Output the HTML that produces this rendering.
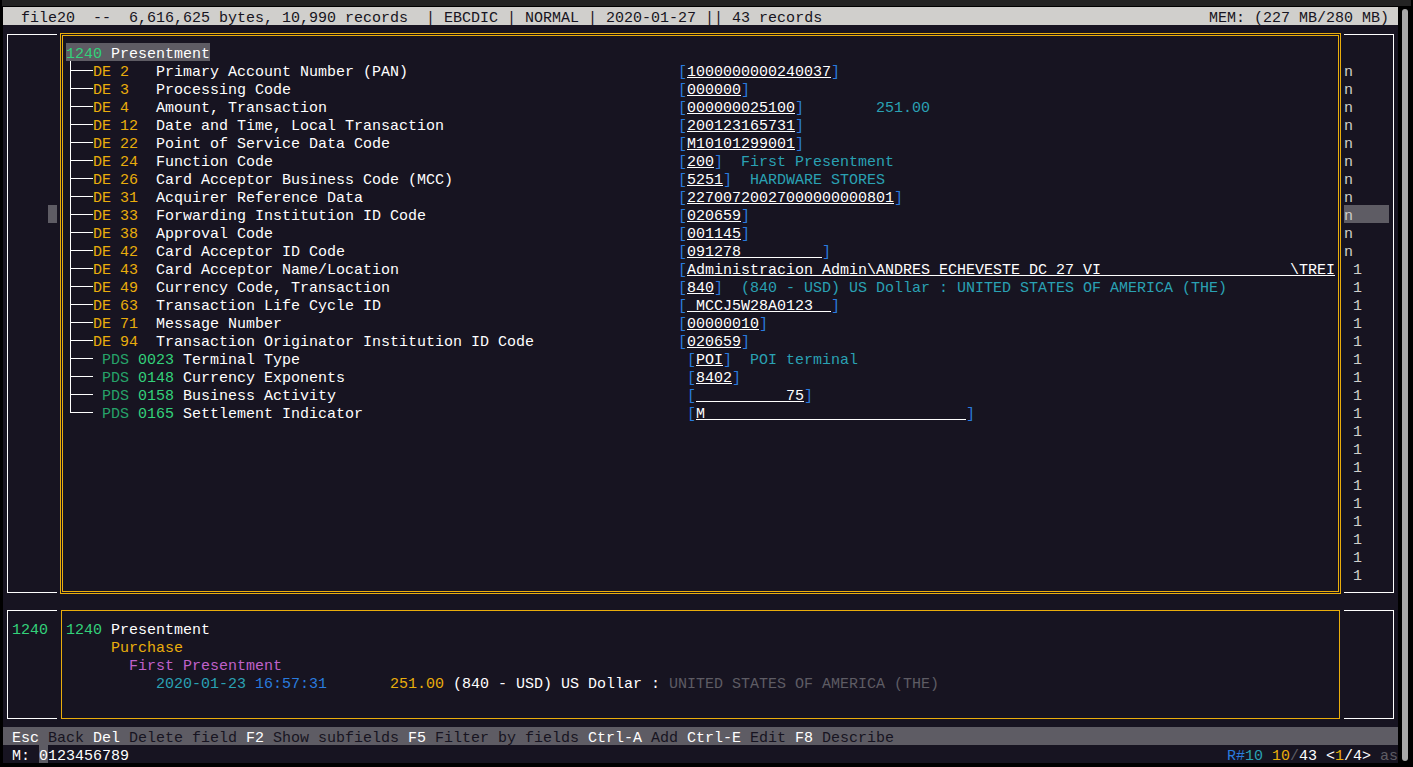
<!DOCTYPE html><html><head><meta charset="utf-8"><style>
html,body{margin:0;padding:0;background:#000;width:1413px;height:767px;overflow:hidden;position:relative}
#top{position:absolute;left:2px;top:0;width:1409px;height:6px;background:#232323}
#term{position:absolute;left:3px;top:7px;width:1395px;height:756px;background:#171421}
#sb{position:absolute;left:1402px;top:9px;width:6px;height:752px;background:#a8a8a8;border-radius:3px}
.r{position:absolute;height:1px}
.t{position:absolute;font-family:"Liberation Mono",monospace;font-size:15px;line-height:18px;height:18px;white-space:pre}
.u{text-decoration:underline;text-underline-offset:2px}
</style></head><body>
<div id="top"></div><div id="term"></div><div id="sb"></div>

<div class="r" style="left:3px;top:7px;width:1395px;height:18px;background:#d0cfcc"></div>
<div class="r" style="left:66px;top:43px;width:144px;height:18px;background:#5e5c64"></div>
<div class="r" style="left:70px;top:61px;width:1px;height:352px;background:#ffffff"></div>
<div class="r" style="left:70px;top:70px;width:23px;height:1px;background:#ffffff"></div>
<div class="r" style="left:70px;top:88px;width:23px;height:1px;background:#ffffff"></div>
<div class="r" style="left:70px;top:106px;width:23px;height:1px;background:#ffffff"></div>
<div class="r" style="left:70px;top:124px;width:23px;height:1px;background:#ffffff"></div>
<div class="r" style="left:70px;top:142px;width:23px;height:1px;background:#ffffff"></div>
<div class="r" style="left:70px;top:160px;width:23px;height:1px;background:#ffffff"></div>
<div class="r" style="left:70px;top:178px;width:23px;height:1px;background:#ffffff"></div>
<div class="r" style="left:70px;top:196px;width:23px;height:1px;background:#ffffff"></div>
<div class="r" style="left:70px;top:214px;width:23px;height:1px;background:#ffffff"></div>
<div class="r" style="left:70px;top:232px;width:23px;height:1px;background:#ffffff"></div>
<div class="r" style="left:70px;top:250px;width:23px;height:1px;background:#ffffff"></div>
<div class="r" style="left:70px;top:268px;width:23px;height:1px;background:#ffffff"></div>
<div class="r" style="left:70px;top:286px;width:23px;height:1px;background:#ffffff"></div>
<div class="r" style="left:70px;top:304px;width:23px;height:1px;background:#ffffff"></div>
<div class="r" style="left:70px;top:322px;width:23px;height:1px;background:#ffffff"></div>
<div class="r" style="left:70px;top:340px;width:23px;height:1px;background:#ffffff"></div>
<div class="r" style="left:70px;top:358px;width:23px;height:1px;background:#ffffff"></div>
<div class="r" style="left:70px;top:376px;width:23px;height:1px;background:#ffffff"></div>
<div class="r" style="left:70px;top:394px;width:23px;height:1px;background:#ffffff"></div>
<div class="r" style="left:70px;top:412px;width:23px;height:1px;background:#ffffff"></div>
<div class="r" style="left:1344px;top:205px;width:45px;height:18px;background:#5e5c64"></div>
<div class="r" style="left:48px;top:205px;width:9px;height:18px;background:#5e5c64"></div>
<div class="r" style="left:7px;top:34px;width:50px;height:1px;background:#ffffff"></div>
<div class="r" style="left:1344px;top:34px;width:50px;height:1px;background:#ffffff"></div>
<div class="r" style="left:7px;top:592px;width:50px;height:1px;background:#ffffff"></div>
<div class="r" style="left:1344px;top:592px;width:50px;height:1px;background:#ffffff"></div>
<div class="r" style="left:7px;top:34px;width:1px;height:559px;background:#ffffff"></div>
<div class="r" style="left:1393px;top:34px;width:1px;height:559px;background:#ffffff"></div>
<div class="r" style="left:7px;top:610px;width:50px;height:1px;background:#ffffff"></div>
<div class="r" style="left:1344px;top:610px;width:50px;height:1px;background:#ffffff"></div>
<div class="r" style="left:7px;top:718px;width:50px;height:1px;background:#ffffff"></div>
<div class="r" style="left:1344px;top:718px;width:50px;height:1px;background:#ffffff"></div>
<div class="r" style="left:7px;top:610px;width:1px;height:109px;background:#ffffff"></div>
<div class="r" style="left:1393px;top:610px;width:1px;height:109px;background:#ffffff"></div>
<div class="r" style="left:60px;top:33px;width:1281px;height:1px;background:#e9ad0c"></div>
<div class="r" style="left:60px;top:593px;width:1281px;height:1px;background:#e9ad0c"></div>
<div class="r" style="left:60px;top:33px;width:1px;height:561px;background:#e9ad0c"></div>
<div class="r" style="left:1340px;top:33px;width:1px;height:561px;background:#e9ad0c"></div>
<div class="r" style="left:62px;top:35px;width:1277px;height:1px;background:#e9ad0c"></div>
<div class="r" style="left:62px;top:591px;width:1277px;height:1px;background:#e9ad0c"></div>
<div class="r" style="left:62px;top:35px;width:1px;height:557px;background:#e9ad0c"></div>
<div class="r" style="left:1338px;top:35px;width:1px;height:557px;background:#e9ad0c"></div>
<div class="r" style="left:61px;top:610px;width:1279px;height:1px;background:#e9ad0c"></div>
<div class="r" style="left:61px;top:718px;width:1279px;height:1px;background:#e9ad0c"></div>
<div class="r" style="left:61px;top:610px;width:1px;height:109px;background:#e9ad0c"></div>
<div class="r" style="left:1339px;top:610px;width:1px;height:109px;background:#e9ad0c"></div>
<div class="r" style="left:3px;top:727px;width:1395px;height:18px;background:#5e5c64"></div>
<div class="r" style="left:39px;top:745px;width:9px;height:18px;background:#5e5c64"></div>
<div class="r" style="left:687px;top:77px;width:144px;height:1px;background:#ffffff"></div>
<div class="r" style="left:687px;top:95px;width:54px;height:1px;background:#ffffff"></div>
<div class="r" style="left:687px;top:113px;width:108px;height:1px;background:#ffffff"></div>
<div class="r" style="left:687px;top:131px;width:108px;height:1px;background:#ffffff"></div>
<div class="r" style="left:687px;top:149px;width:108px;height:1px;background:#ffffff"></div>
<div class="r" style="left:687px;top:167px;width:27px;height:1px;background:#ffffff"></div>
<div class="r" style="left:687px;top:185px;width:36px;height:1px;background:#ffffff"></div>
<div class="r" style="left:687px;top:203px;width:207px;height:1px;background:#ffffff"></div>
<div class="r" style="left:687px;top:221px;width:54px;height:1px;background:#ffffff"></div>
<div class="r" style="left:687px;top:239px;width:54px;height:1px;background:#ffffff"></div>
<div class="r" style="left:687px;top:257px;width:135px;height:1px;background:#ffffff"></div>
<div class="r" style="left:687px;top:275px;width:648px;height:1px;background:#ffffff"></div>
<div class="r" style="left:687px;top:293px;width:27px;height:1px;background:#ffffff"></div>
<div class="r" style="left:687px;top:311px;width:144px;height:1px;background:#ffffff"></div>
<div class="r" style="left:687px;top:329px;width:72px;height:1px;background:#ffffff"></div>
<div class="r" style="left:687px;top:347px;width:54px;height:1px;background:#ffffff"></div>
<div class="r" style="left:696px;top:365px;width:27px;height:1px;background:#ffffff"></div>
<div class="r" style="left:696px;top:383px;width:36px;height:1px;background:#ffffff"></div>
<div class="r" style="left:696px;top:401px;width:108px;height:1px;background:#ffffff"></div>
<div class="r" style="left:696px;top:419px;width:270px;height:1px;background:#ffffff"></div>
<div class="t" style="left:21px;top:10px;color:#171421">file20  --  6,616,625 bytes, 10,990 records  | EBCDIC | NORMAL | 2020-01-27 || 43 records</div>
<div class="t" style="left:1209px;top:10px;color:#171421">MEM: (227 MB/280 MB)</div>
<div class="t" style="left:66px;top:46px;color:#33d17a">1240</div>
<div class="t" style="left:111px;top:46px;color:#ffffff">Presentment</div>
<div class="t" style="left:93px;top:64px;color:#e9ad0c">DE</div>
<div class="t" style="left:120px;top:64px;color:#e9ad0c">2</div>
<div class="t" style="left:156px;top:64px;color:#ffffff">Primary Account Number (PAN)</div>
<div class="t" style="left:678px;top:64px;color:#2a7bde">[</div>
<div class="t" style="left:687px;top:64px;color:#ffffff">1000000000240037</div>
<div class="t" style="left:831px;top:64px;color:#2a7bde">]</div>
<div class="t" style="left:93px;top:82px;color:#e9ad0c">DE</div>
<div class="t" style="left:120px;top:82px;color:#e9ad0c">3</div>
<div class="t" style="left:156px;top:82px;color:#ffffff">Processing Code</div>
<div class="t" style="left:678px;top:82px;color:#2a7bde">[</div>
<div class="t" style="left:687px;top:82px;color:#ffffff">000000</div>
<div class="t" style="left:741px;top:82px;color:#2a7bde">]</div>
<div class="t" style="left:93px;top:100px;color:#e9ad0c">DE</div>
<div class="t" style="left:120px;top:100px;color:#e9ad0c">4</div>
<div class="t" style="left:156px;top:100px;color:#ffffff">Amount, Transaction</div>
<div class="t" style="left:678px;top:100px;color:#2a7bde">[</div>
<div class="t" style="left:687px;top:100px;color:#ffffff">000000025100</div>
<div class="t" style="left:795px;top:100px;color:#2a7bde">]</div>
<div class="t" style="left:876px;top:100px;color:#2aa1b3">251.00</div>
<div class="t" style="left:93px;top:118px;color:#e9ad0c">DE</div>
<div class="t" style="left:120px;top:118px;color:#e9ad0c">12</div>
<div class="t" style="left:156px;top:118px;color:#ffffff">Date and Time, Local Transaction</div>
<div class="t" style="left:678px;top:118px;color:#2a7bde">[</div>
<div class="t" style="left:687px;top:118px;color:#ffffff">200123165731</div>
<div class="t" style="left:795px;top:118px;color:#2a7bde">]</div>
<div class="t" style="left:93px;top:136px;color:#e9ad0c">DE</div>
<div class="t" style="left:120px;top:136px;color:#e9ad0c">22</div>
<div class="t" style="left:156px;top:136px;color:#ffffff">Point of Service Data Code</div>
<div class="t" style="left:678px;top:136px;color:#2a7bde">[</div>
<div class="t" style="left:687px;top:136px;color:#ffffff">M10101299001</div>
<div class="t" style="left:795px;top:136px;color:#2a7bde">]</div>
<div class="t" style="left:93px;top:154px;color:#e9ad0c">DE</div>
<div class="t" style="left:120px;top:154px;color:#e9ad0c">24</div>
<div class="t" style="left:156px;top:154px;color:#ffffff">Function Code</div>
<div class="t" style="left:678px;top:154px;color:#2a7bde">[</div>
<div class="t" style="left:687px;top:154px;color:#ffffff">200</div>
<div class="t" style="left:714px;top:154px;color:#2a7bde">]</div>
<div class="t" style="left:741px;top:154px;color:#2aa1b3">First Presentment</div>
<div class="t" style="left:93px;top:172px;color:#e9ad0c">DE</div>
<div class="t" style="left:120px;top:172px;color:#e9ad0c">26</div>
<div class="t" style="left:156px;top:172px;color:#ffffff">Card Acceptor Business Code (MCC)</div>
<div class="t" style="left:678px;top:172px;color:#2a7bde">[</div>
<div class="t" style="left:687px;top:172px;color:#ffffff">5251</div>
<div class="t" style="left:723px;top:172px;color:#2a7bde">]</div>
<div class="t" style="left:750px;top:172px;color:#2aa1b3">HARDWARE STORES</div>
<div class="t" style="left:93px;top:190px;color:#e9ad0c">DE</div>
<div class="t" style="left:120px;top:190px;color:#e9ad0c">31</div>
<div class="t" style="left:156px;top:190px;color:#ffffff">Acquirer Reference Data</div>
<div class="t" style="left:678px;top:190px;color:#2a7bde">[</div>
<div class="t" style="left:687px;top:190px;color:#ffffff">22700720027000000000801</div>
<div class="t" style="left:894px;top:190px;color:#2a7bde">]</div>
<div class="t" style="left:93px;top:208px;color:#e9ad0c">DE</div>
<div class="t" style="left:120px;top:208px;color:#e9ad0c">33</div>
<div class="t" style="left:156px;top:208px;color:#ffffff">Forwarding Institution ID Code</div>
<div class="t" style="left:678px;top:208px;color:#2a7bde">[</div>
<div class="t" style="left:687px;top:208px;color:#ffffff">020659</div>
<div class="t" style="left:741px;top:208px;color:#2a7bde">]</div>
<div class="t" style="left:93px;top:226px;color:#e9ad0c">DE</div>
<div class="t" style="left:120px;top:226px;color:#e9ad0c">38</div>
<div class="t" style="left:156px;top:226px;color:#ffffff">Approval Code</div>
<div class="t" style="left:678px;top:226px;color:#2a7bde">[</div>
<div class="t" style="left:687px;top:226px;color:#ffffff">001145</div>
<div class="t" style="left:741px;top:226px;color:#2a7bde">]</div>
<div class="t" style="left:93px;top:244px;color:#e9ad0c">DE</div>
<div class="t" style="left:120px;top:244px;color:#e9ad0c">42</div>
<div class="t" style="left:156px;top:244px;color:#ffffff">Card Acceptor ID Code</div>
<div class="t" style="left:678px;top:244px;color:#2a7bde">[</div>
<div class="t" style="left:687px;top:244px;color:#ffffff">091278         </div>
<div class="t" style="left:822px;top:244px;color:#2a7bde">]</div>
<div class="t" style="left:93px;top:262px;color:#e9ad0c">DE</div>
<div class="t" style="left:120px;top:262px;color:#e9ad0c">43</div>
<div class="t" style="left:156px;top:262px;color:#ffffff">Card Acceptor Name/Location</div>
<div class="t" style="left:678px;top:262px;color:#2a7bde">[</div>
<div class="t" style="left:687px;top:262px;color:#ffffff">Administracion Admin\ANDRES ECHEVESTE DC 27 VI                     \TREI</div>
<div class="t" style="left:93px;top:280px;color:#e9ad0c">DE</div>
<div class="t" style="left:120px;top:280px;color:#e9ad0c">49</div>
<div class="t" style="left:156px;top:280px;color:#ffffff">Currency Code, Transaction</div>
<div class="t" style="left:678px;top:280px;color:#2a7bde">[</div>
<div class="t" style="left:687px;top:280px;color:#ffffff">840</div>
<div class="t" style="left:714px;top:280px;color:#2a7bde">]</div>
<div class="t" style="left:741px;top:280px;color:#2aa1b3">(840 - USD) US Dollar : UNITED STATES OF AMERICA (THE)</div>
<div class="t" style="left:93px;top:298px;color:#e9ad0c">DE</div>
<div class="t" style="left:120px;top:298px;color:#e9ad0c">63</div>
<div class="t" style="left:156px;top:298px;color:#ffffff">Transaction Life Cycle ID</div>
<div class="t" style="left:678px;top:298px;color:#2a7bde">[</div>
<div class="t" style="left:687px;top:298px;color:#ffffff"> MCCJ5W28A0123  </div>
<div class="t" style="left:831px;top:298px;color:#2a7bde">]</div>
<div class="t" style="left:93px;top:316px;color:#e9ad0c">DE</div>
<div class="t" style="left:120px;top:316px;color:#e9ad0c">71</div>
<div class="t" style="left:156px;top:316px;color:#ffffff">Message Number</div>
<div class="t" style="left:678px;top:316px;color:#2a7bde">[</div>
<div class="t" style="left:687px;top:316px;color:#ffffff">00000010</div>
<div class="t" style="left:759px;top:316px;color:#2a7bde">]</div>
<div class="t" style="left:93px;top:334px;color:#e9ad0c">DE</div>
<div class="t" style="left:120px;top:334px;color:#e9ad0c">94</div>
<div class="t" style="left:156px;top:334px;color:#ffffff">Transaction Originator Institution ID Code</div>
<div class="t" style="left:678px;top:334px;color:#2a7bde">[</div>
<div class="t" style="left:687px;top:334px;color:#ffffff">020659</div>
<div class="t" style="left:741px;top:334px;color:#2a7bde">]</div>
<div class="t" style="left:102px;top:352px;color:#26a269">PDS</div>
<div class="t" style="left:138px;top:352px;color:#33d17a">0023</div>
<div class="t" style="left:183px;top:352px;color:#ffffff">Terminal Type</div>
<div class="t" style="left:687px;top:352px;color:#2a7bde">[</div>
<div class="t" style="left:696px;top:352px;color:#ffffff">POI</div>
<div class="t" style="left:723px;top:352px;color:#2a7bde">]</div>
<div class="t" style="left:750px;top:352px;color:#2aa1b3">POI terminal</div>
<div class="t" style="left:102px;top:370px;color:#26a269">PDS</div>
<div class="t" style="left:138px;top:370px;color:#33d17a">0148</div>
<div class="t" style="left:183px;top:370px;color:#ffffff">Currency Exponents</div>
<div class="t" style="left:687px;top:370px;color:#2a7bde">[</div>
<div class="t" style="left:696px;top:370px;color:#ffffff">8402</div>
<div class="t" style="left:732px;top:370px;color:#2a7bde">]</div>
<div class="t" style="left:102px;top:388px;color:#26a269">PDS</div>
<div class="t" style="left:138px;top:388px;color:#33d17a">0158</div>
<div class="t" style="left:183px;top:388px;color:#ffffff">Business Activity</div>
<div class="t" style="left:687px;top:388px;color:#2a7bde">[</div>
<div class="t" style="left:696px;top:388px;color:#ffffff">          75</div>
<div class="t" style="left:804px;top:388px;color:#2a7bde">]</div>
<div class="t" style="left:102px;top:406px;color:#26a269">PDS</div>
<div class="t" style="left:138px;top:406px;color:#33d17a">0165</div>
<div class="t" style="left:183px;top:406px;color:#ffffff">Settlement Indicator</div>
<div class="t" style="left:687px;top:406px;color:#2a7bde">[</div>
<div class="t" style="left:696px;top:406px;color:#ffffff">M                             </div>
<div class="t" style="left:966px;top:406px;color:#2a7bde">]</div>
<div class="t" style="left:1344px;top:64px;color:#d0cfcc">n</div>
<div class="t" style="left:1344px;top:82px;color:#d0cfcc">n</div>
<div class="t" style="left:1344px;top:100px;color:#d0cfcc">n</div>
<div class="t" style="left:1344px;top:118px;color:#d0cfcc">n</div>
<div class="t" style="left:1344px;top:136px;color:#d0cfcc">n</div>
<div class="t" style="left:1344px;top:154px;color:#d0cfcc">n</div>
<div class="t" style="left:1344px;top:172px;color:#d0cfcc">n</div>
<div class="t" style="left:1344px;top:190px;color:#d0cfcc">n</div>
<div class="t" style="left:1344px;top:208px;color:#d0cfcc">n</div>
<div class="t" style="left:1344px;top:226px;color:#d0cfcc">n</div>
<div class="t" style="left:1344px;top:244px;color:#d0cfcc">n</div>
<div class="t" style="left:1353px;top:262px;color:#d0cfcc">1</div>
<div class="t" style="left:1353px;top:280px;color:#d0cfcc">1</div>
<div class="t" style="left:1353px;top:298px;color:#d0cfcc">1</div>
<div class="t" style="left:1353px;top:316px;color:#d0cfcc">1</div>
<div class="t" style="left:1353px;top:334px;color:#d0cfcc">1</div>
<div class="t" style="left:1353px;top:352px;color:#d0cfcc">1</div>
<div class="t" style="left:1353px;top:370px;color:#d0cfcc">1</div>
<div class="t" style="left:1353px;top:388px;color:#d0cfcc">1</div>
<div class="t" style="left:1353px;top:406px;color:#d0cfcc">1</div>
<div class="t" style="left:1353px;top:424px;color:#d0cfcc">1</div>
<div class="t" style="left:1353px;top:442px;color:#d0cfcc">1</div>
<div class="t" style="left:1353px;top:460px;color:#d0cfcc">1</div>
<div class="t" style="left:1353px;top:478px;color:#d0cfcc">1</div>
<div class="t" style="left:1353px;top:496px;color:#d0cfcc">1</div>
<div class="t" style="left:1353px;top:514px;color:#d0cfcc">1</div>
<div class="t" style="left:1353px;top:532px;color:#d0cfcc">1</div>
<div class="t" style="left:1353px;top:550px;color:#d0cfcc">1</div>
<div class="t" style="left:1353px;top:568px;color:#d0cfcc">1</div>
<div class="t" style="left:12px;top:622px;color:#33d17a">1240</div>
<div class="t" style="left:66px;top:622px;color:#33d17a">1240</div>
<div class="t" style="left:111px;top:622px;color:#ffffff">Presentment</div>
<div class="t" style="left:111px;top:640px;color:#e9ad0c">Purchase</div>
<div class="t" style="left:129px;top:658px;color:#c061cb">First Presentment</div>
<div class="t" style="left:156px;top:676px;color:#2aa1b3">2020-01-23</div>
<div class="t" style="left:255px;top:676px;color:#2a7bde">16:57:31</div>
<div class="t" style="left:390px;top:676px;color:#e9ad0c">251.00</div>
<div class="t" style="left:453px;top:676px;color:#ffffff">(840 - USD) US Dollar :</div>
<div class="t" style="left:669px;top:676px;color:#5e5c64">UNITED STATES OF AMERICA (THE)</div>
<div class="t" style="left:12px;top:730px;color:#ffffff">Esc</div>
<div class="t" style="left:39px;top:730px;color:#171421"> Back </div>
<div class="t" style="left:93px;top:730px;color:#ffffff">Del</div>
<div class="t" style="left:120px;top:730px;color:#171421"> Delete field </div>
<div class="t" style="left:246px;top:730px;color:#ffffff">F2</div>
<div class="t" style="left:264px;top:730px;color:#171421"> Show subfields </div>
<div class="t" style="left:408px;top:730px;color:#ffffff">F5</div>
<div class="t" style="left:426px;top:730px;color:#171421"> Filter by fields </div>
<div class="t" style="left:588px;top:730px;color:#ffffff">Ctrl-A</div>
<div class="t" style="left:642px;top:730px;color:#171421"> Add </div>
<div class="t" style="left:687px;top:730px;color:#ffffff">Ctrl-E</div>
<div class="t" style="left:741px;top:730px;color:#171421"> Edit </div>
<div class="t" style="left:795px;top:730px;color:#ffffff">F8</div>
<div class="t" style="left:813px;top:730px;color:#171421"> Describe</div>
<div class="t" style="left:12px;top:748px;color:#ffffff">M: 0123456789</div>
<div class="t" style="left:1227px;top:748px;color:#2a7bde">R#</div>
<div class="t" style="left:1245px;top:748px;color:#2aa1b3">10</div>
<div class="t" style="left:1272px;top:748px;color:#e9ad0c">10</div>
<div class="t" style="left:1290px;top:748px;color:#5e5c64">/</div>
<div class="t" style="left:1299px;top:748px;color:#ffffff">43</div>
<div class="t" style="left:1326px;top:748px;color:#ffffff">&lt;</div>
<div class="t" style="left:1335px;top:748px;color:#e9ad0c">1</div>
<div class="t" style="left:1344px;top:748px;color:#ffffff">/4&gt;</div>
<div class="t" style="left:1380px;top:748px;color:#5e5c64">as</div>
</body></html>
